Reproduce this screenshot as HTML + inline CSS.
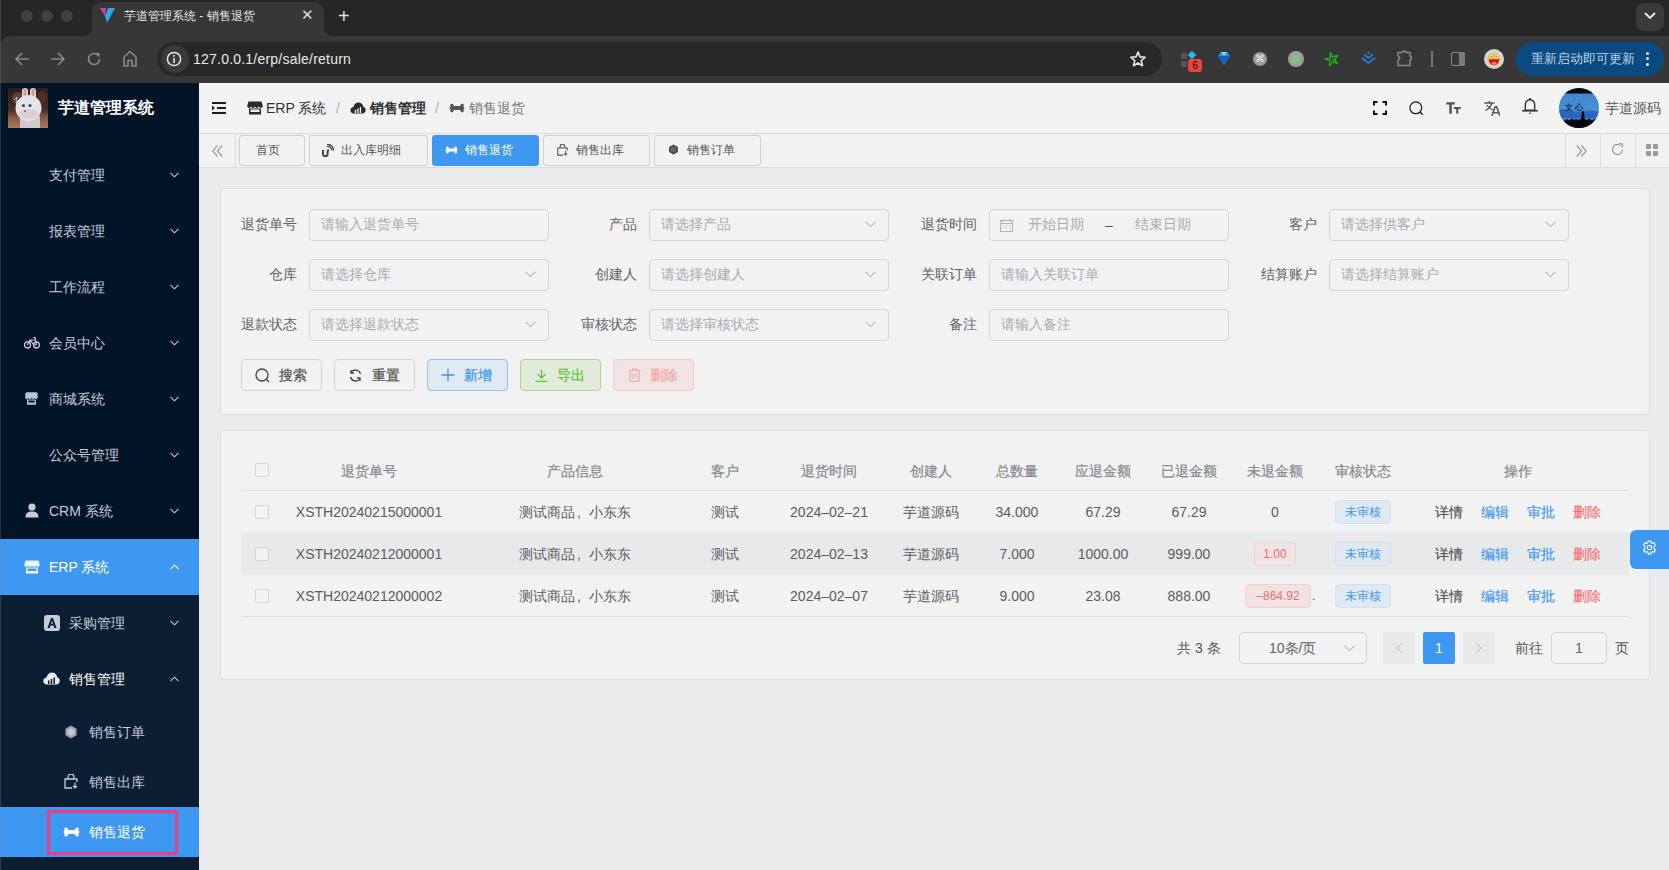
<!DOCTYPE html>
<html><head><meta charset="utf-8">
<style>
*{box-sizing:border-box;margin:0;padding:0}
html,body{width:1669px;height:870px;overflow:hidden;background:#e9eaec;font-family:"Liberation Sans",sans-serif;}
.abs{position:absolute}
/* browser chrome */
#tabbar{position:absolute;left:0;top:0;width:1669px;height:83px;background:#262626}
#toolbar{position:absolute;left:0;top:36px;width:1669px;height:47px;background:#373737;border-radius:10px 0 0 0}
.dot{position:absolute;top:10px;width:12px;height:12px;border-radius:50%;background:#3f3f3f}
#ctab{position:absolute;left:92px;top:2px;width:232px;height:34px;background:#373737;border-radius:9px 9px 0 0}
#ctab:before,#ctab:after{content:"";position:absolute;bottom:0;width:8px;height:8px;background:radial-gradient(circle at 0 0,transparent 8px,#373737 8.5px)}
#ctab:before{left:-8px;background:radial-gradient(circle at 0 0,transparent 7.5px,#373737 8px)}
#ctab:after{right:-8px;background:radial-gradient(circle at 100% 0,transparent 7.5px,#373737 8px)}
#omni{position:absolute;left:157px;top:6px;width:1005px;height:34px;border-radius:17px;background:#282828}
/* sidebar */
#side{position:absolute;left:0;top:83px;width:199px;height:787px;background:#011428;overflow:hidden}
.mi{position:absolute;left:0;width:199px;height:56px;color:#c3ccd8;font-size:14px;line-height:56px}
.mi .t{position:absolute;left:49px;top:0}
.arr{position:absolute;left:170px;top:25px}
.arr.up{transform:rotate(180deg)}
/* header */
#hdr{position:absolute;left:199px;top:83px;width:1470px;height:51px;background:#f2f2f2;border-bottom:1px solid #d9dbe0}
#tags{position:absolute;left:199px;top:134px;width:1470px;height:34px;background:#f2f2f2;border-bottom:1px solid #d9dbe0}
#tags>*{margin-top:-1px}
.tag{position:absolute;top:2px;height:31px;border:1px solid #cfd0d4;border-radius:3px;font-size:12px;line-height:29px;color:#555;background:#f2f2f2}
.tag.act{background:#3e97f1;border-color:#3e97f1;color:#fff}
.card{position:absolute;left:220px;width:1430px;background:#f2f2f2;border:1px solid #dcdee3;border-radius:4px}
.lbl{position:absolute;font-size:14px;color:#606266;line-height:30px;text-align:right}
.inp{position:absolute;height:32px;width:240px;border:1px solid #d3d5da;border-radius:4px;font-size:14px;color:#a8abb2;line-height:28px;padding-left:11px;background:#f2f2f2}
.chev{position:absolute;right:12px;top:11px}
.btn{position:absolute;top:359px;height:32px;border:1px solid #d3d5da;border-radius:4px;font-size:14px;line-height:30px;color:#555;background:#f2f2f2}
.th{position:absolute;top:451px;height:41px;line-height:41px;font-size:14px;color:#85888d;font-weight:400;-webkit-text-stroke:0.2px #85888d;text-align:center}
.td{position:absolute;height:42px;line-height:42px;font-size:14px;color:#5a5c60;text-align:center}
.cb{position:absolute;left:255px;width:14px;height:14px;border:1px solid #d3d5da;border-radius:2px;background:#f2f2f2}
</style></head><body>

<!-- ============ BROWSER CHROME ============ -->
<div id="tabbar">
  <div class="dot" style="left:21px"></div>
  <div class="dot" style="left:41px"></div>
  <div class="dot" style="left:61px"></div>
  <div id="ctab"></div>
  <svg class="abs" style="left:100px;top:7px" width="16" height="17" viewBox="0 0 16 17"><path d="M0 1 L6 1 L5 9 Z" fill="#d63bb5"/><path d="M5 9 L8 1 L15 1 L7 16 Z" fill="#2ba8e8"/></svg>
  <div class="abs" style="left:124px;top:8px;font-size:12px;color:#e6e6e6;line-height:16px">芋道管理系统 - 销售退货</div>
  <div class="abs" style="left:301px;top:7px;font-size:15px;color:#ddd;line-height:16px">✕</div>
  <div class="abs" style="left:338px;top:5px;font-size:20px;color:#ddd;line-height:22px">+</div>
  <div class="abs" style="left:1636px;top:3px;width:28px;height:28px;border-radius:8px;background:#3a3a3a"></div>
  <svg class="abs" style="left:1644px;top:12px" width="12" height="8" viewBox="0 0 12 8"><path d="M1 1 L6 6 L11 1" stroke="#eee" stroke-width="1.8" fill="none"/></svg>
</div>
<div id="toolbar">
  <svg class="abs" style="left:14px;top:15px" width="16" height="16" viewBox="0 0 16 16"><path d="M15 8 H2 M8 2 L2 8 L8 14" stroke="#8a8a8a" stroke-width="1.6" fill="none"/></svg>
  <svg class="abs" style="left:50px;top:15px" width="16" height="16" viewBox="0 0 16 16"><path d="M1 8 H14 M8 2 L14 8 L8 14" stroke="#8a8a8a" stroke-width="1.6" fill="none"/></svg>
  <svg class="abs" style="left:86px;top:15px" width="16" height="16" viewBox="0 0 16 16"><path d="M13.5 8 A5.5 5.5 0 1 1 11.5 3.8" stroke="#8a8a8a" stroke-width="1.6" fill="none"/><path d="M9 2 L13.5 2 L13.5 6.5 Z" fill="#8a8a8a"/></svg>
  <svg class="abs" style="left:122px;top:14px" width="16" height="17" viewBox="0 0 16 17"><path d="M2 16 V7 L8 1.5 L14 7 V16 H10 V10.5 H6 V16 Z" stroke="#8a8a8a" stroke-width="1.6" fill="none"/></svg>
  <div id="omni"></div>
  <div class="abs" style="left:161px;top:45px"></div>
</div>
<div class="abs" style="left:161px;top:45px;width:28px;height:28px;border-radius:50%;background:#3a3a3a"></div>
<svg class="abs" style="left:166px;top:51px" width="16" height="16" viewBox="0 0 16 16"><circle cx="8" cy="8" r="6.6" stroke="#e8e8e8" stroke-width="1.5" fill="none"/><rect x="7.2" y="7" width="1.6" height="5" fill="#e8e8e8"/><rect x="7.2" y="4" width="1.6" height="1.7" fill="#e8e8e8"/></svg>
<div class="abs" style="left:193px;top:50px;font-size:14px;color:#e8e8e8;line-height:18px;letter-spacing:0.22px">127.0.0.1/erp/sale/return</div>
<svg class="abs" style="left:1129px;top:50px" width="18" height="18" viewBox="0 0 18 18"><path d="M9.00 2.00 L11.00 6.85 L16.23 7.25 L12.23 10.65 L13.47 15.75 L9.00 13.00 L4.53 15.75 L5.77 10.65 L1.77 7.25 L7.00 6.85 Z" stroke="#e6e6e6" stroke-width="1.6" fill="none" stroke-linejoin="round"/></svg>

<!-- ext icons -->
<div class="abs" style="left:1181px;top:53px;width:6px;height:6px;background:#555;border-radius:1px"></div>
<div class="abs" style="left:1181px;top:61px;width:6px;height:6px;background:#555;border-radius:1px"></div>
<div class="abs" style="left:1189px;top:52px;width:6px;height:6px;background:#2bb7f5;transform:rotate(45deg)"></div>
<div class="abs" style="left:1188px;top:59px;width:14px;height:13px;background:#e8453c;border-radius:3px;color:#111;font-size:10px;line-height:13px;text-align:center">6</div>
<svg class="abs" style="left:1217px;top:51px" width="14" height="15" viewBox="0 0 14 15"><path d="M1 5 L4 1 H10 L13 5 L7 14 Z" fill="#2f8fe8"/><path d="M1 5 H13 L7 14 Z" fill="#1763c5"/><path d="M4 1 L7 5 L10 1Z" fill="#8fd0ff"/></svg>
<div class="abs" style="left:1253px;top:52px;width:14px;height:14px;border-radius:50%;background:#9a9a9a;color:#eee;font-size:10px;line-height:14px;text-align:center">⌘</div>
<div class="abs" style="left:1288px;top:51px;width:16px;height:16px;border-radius:50%;background:#9e9e9e"></div>
<div class="abs" style="left:1292px;top:55px;width:8px;height:8px;border-radius:50%;background:#7dc97a"></div>
<svg class="abs" style="left:1324px;top:51px" width="16" height="16" viewBox="0 0 16 16"><path d="M6.19 1.54 L13.44 12.71 L1.01 7.93 L13.87 4.49 L5.49 14.84 Z" stroke="#1fb020" stroke-width="1.3" fill="none" stroke-linejoin="round"/></svg>
<svg class="abs" style="left:1361px;top:52px" width="15" height="14" viewBox="0 0 15 14"><path d="M1 6 L7.5 11 L14 6 M3 2.5 L7.5 6 L12 2.5" stroke="#2b7de0" stroke-width="1.6" fill="none"/><rect x="6.5" y="0" width="2" height="2" fill="#2b7de0"/></svg>
<svg class="abs" style="left:1396px;top:49px" width="18" height="18" viewBox="0 0 18 18"><path d="M2 3.5 H6.8 A1.6 1.6 0 0 1 10 3.5 H14 V7.6 A1.6 1.6 0 0 1 14 10.8 V16.5 H2 V11.5 L4 9.3 L2 7 Z" stroke="#8a8a8a" stroke-width="1.5" fill="none" stroke-linejoin="round"/></svg>
<div class="abs" style="left:1431px;top:51px;width:1.5px;height:16px;background:#777"></div>
<div class="abs" style="left:1451px;top:52px;width:14px;height:14px;border:1.5px solid #8a8a8a;border-radius:2px"></div>
<div class="abs" style="left:1459px;top:52px;width:6px;height:14px;background:#7a7a7a;border-radius:0 2px 2px 0"></div>
<svg class="abs" style="left:1484px;top:49px" width="20" height="20" viewBox="0 0 20 20"><circle cx="10" cy="10" r="10" fill="#d4d4d4"/><circle cx="10" cy="10.5" r="6.6" fill="#f0c040"/><path d="M4.8 10.2 H15.2 C15 13.8 12.8 16 10 16 C7.2 16 5 13.8 4.8 10.2 Z" fill="#b8202a"/><ellipse cx="10" cy="14.2" rx="2.6" ry="1.5" fill="#f27a8a"/><ellipse cx="7.5" cy="7.2" rx="1.4" ry="1.1" fill="#f5f5f5"/><ellipse cx="12.6" cy="7.2" rx="1.4" ry="1.1" fill="#f5f5f5"/><circle cx="7.8" cy="7.3" r="0.6" fill="#345"/><circle cx="12.3" cy="7.3" r="0.6" fill="#345"/></svg>
<div class="abs" style="left:1516px;top:42px;width:148px;height:34px;border-radius:17px;background:#0b4a80"></div>
<div class="abs" style="left:1531px;top:50px;font-size:13px;color:#bdd3ea;line-height:18px">重新启动即可更新</div>
<div class="abs" style="left:1646px;top:52px;width:3px;height:3px;border-radius:50%;background:#e8e8e8"></div>
<div class="abs" style="left:1646px;top:57px;width:3px;height:3px;border-radius:50%;background:#e8e8e8"></div>
<div class="abs" style="left:1646px;top:63px;width:3px;height:3px;border-radius:50%;background:#e8e8e8"></div>

<!-- ============ SIDEBAR ============ -->
<div id="side">
  <svg class="abs" style="left:8px;top:5px" width="40" height="40" viewBox="0 0 40 40">
    <defs><linearGradient id="lg1" x1="0" y1="0" x2="0" y2="1"><stop offset="0" stop-color="#2e1c1a"/><stop offset="0.55" stop-color="#4a2e26"/><stop offset="0.75" stop-color="#8a5c48"/><stop offset="1" stop-color="#a77a62"/></linearGradient></defs>
    <rect width="40" height="40" fill="url(#lg1)"/>
    <circle cx="34" cy="8" r="5" fill="#5a3a30" opacity="0.6"/>
    <circle cx="10" cy="10" r="6" fill="#5a5050" opacity="0.7"/>
    <path d="M6 12 L9 9 L8 15 L11 13" stroke="#ddd" stroke-width="0.8" fill="none"/>
    <rect x="14" y="0" width="6" height="13" rx="3" fill="#e0d8da"/><rect x="15.5" y="1" width="3" height="11" fill="#d49a98"/>
    <rect x="22" y="0" width="6" height="13" rx="3" fill="#e0d8da"/><rect x="23.5" y="1" width="3" height="11" fill="#d49a98"/>
    <path d="M12 28 H32 V40 H12 Z" fill="#cfc8cc"/>
    <circle cx="20.5" cy="20" r="13" fill="#e3e3e8"/>
    <ellipse cx="20.5" cy="26" rx="10" ry="5" fill="#dccfd2"/>
    <circle cx="15.5" cy="17.5" r="1.6" fill="#2d4a78"/><circle cx="22" cy="17.5" r="1.6" fill="#2d4a78"/>
    <ellipse cx="17" cy="23" rx="1.2" ry="0.8" fill="#7a3a3a"/>
  </svg>
  <div class="abs" style="left:58px;top:15px;font-size:16px;font-weight:bold;color:#fff;line-height:20px">芋道管理系统</div>
  <div class="mi" style="top:64px"><span class="t">支付管理</span><svg class="arr" width="9" height="6" viewBox="0 0 9 6"><path d="M0.5 0.8 L4.5 4.8 L8.5 0.8" stroke="#c5cad2" stroke-width="1.1" fill="none"/></svg></div>
  <div class="mi" style="top:120px"><span class="t">报表管理</span><svg class="arr" width="9" height="6" viewBox="0 0 9 6"><path d="M0.5 0.8 L4.5 4.8 L8.5 0.8" stroke="#c5cad2" stroke-width="1.1" fill="none"/></svg></div>
  <div class="mi" style="top:176px"><span class="t">工作流程</span><svg class="arr" width="9" height="6" viewBox="0 0 9 6"><path d="M0.5 0.8 L4.5 4.8 L8.5 0.8" stroke="#c5cad2" stroke-width="1.1" fill="none"/></svg></div>
  <div class="mi" style="top:232px"><svg class="abs" style="left:24px;top:21px" width="16" height="13" viewBox="0 0 16 13"><circle cx="3.5" cy="9" r="3" stroke="#c3ccd8" stroke-width="1.3" fill="none"/><circle cx="12.5" cy="9" r="3" stroke="#c3ccd8" stroke-width="1.3" fill="none"/><path d="M3.5 9 L6 4 L10 9 L12.5 9 M6 4 L11 4 M9 1.5 L11 1.5 L12.5 9" stroke="#c3ccd8" stroke-width="1.2" fill="none"/></svg><span class="t">会员中心</span><svg class="arr" width="9" height="6" viewBox="0 0 9 6"><path d="M0.5 0.8 L4.5 4.8 L8.5 0.8" stroke="#c5cad2" stroke-width="1.1" fill="none"/></svg></div>
  <div class="mi" style="top:288px"><svg class="abs" style="left:25px;top:21px" width="13" height="13" viewBox="0 0 13 13"><path d="M2 0.3 H11 C12 0.3 12.7 1 12.7 2 V5.5 C12.7 6.4 12 7 11.2 7 C10.5 7 10 6.6 9.7 6 C9.4 6.6 8.9 7 8.2 7 C7.5 7 7 6.6 6.5 6 C6 6.6 5.5 7 4.8 7 C4.1 7 3.6 6.6 3.3 6 C3 6.6 2.5 7 1.8 7 C1 7 0.3 6.4 0.3 5.5 V2 C0.3 1 1 0.3 2 0.3 Z" fill="#b9c4d3"/><path d="M2 7.6 H11 V12.7 H2 Z M3.3 8.6 V10.6 H9.7 V8.6 Z" fill="#b9c4d3" fill-rule="evenodd"/></svg><span class="t">商城系统</span><svg class="arr" width="9" height="6" viewBox="0 0 9 6"><path d="M0.5 0.8 L4.5 4.8 L8.5 0.8" stroke="#c5cad2" stroke-width="1.1" fill="none"/></svg></div>
  <div class="mi" style="top:344px"><span class="t">公众号管理</span><svg class="arr" width="9" height="6" viewBox="0 0 9 6"><path d="M0.5 0.8 L4.5 4.8 L8.5 0.8" stroke="#c5cad2" stroke-width="1.1" fill="none"/></svg></div>
  <div class="mi" style="top:400px"><svg class="abs" style="left:25px;top:20px" width="14" height="15" viewBox="0 0 14 15"><circle cx="7" cy="4" r="3.6" fill="#c3ccd8"/><path d="M0.5 14.5 C0.5 10 3 8.5 7 8.5 C11 8.5 13.5 10 13.5 14.5 Z" fill="#c3ccd8"/></svg><span class="t">CRM 系统</span><svg class="arr" width="9" height="6" viewBox="0 0 9 6"><path d="M0.5 0.8 L4.5 4.8 L8.5 0.8" stroke="#c5cad2" stroke-width="1.1" fill="none"/></svg></div>
  <div class="mi" style="top:456px;background:#3e97f1;color:#fff"><svg class="abs" style="left:24px;top:21px" width="16" height="14" viewBox="0 0 16 14"><path d="M1.5 0.5 H14.5 L15.8 5 C15.8 6.3 14.8 7 14 7 C13 7 12.3 6.3 12 5.6 C11.6 6.3 10.9 7 10 7 C9 7 8.3 6.3 8 5.6 C7.7 6.3 7 7 6 7 C5 7 4.4 6.3 4 5.6 C3.7 6.3 3 7 2 7 C1.2 7 0.2 6.3 0.2 5 Z" fill="#eef4fc"/><path d="M2 7.5 H14 V13.5 H2 Z M3.5 8.5 V11 H12.5 V8.5 Z" fill="#eef4fc" fill-rule="evenodd"/></svg><span class="t">ERP 系统</span><svg class="arr" width="9" height="6" viewBox="0 0 9 6"><path d="M0.5 5.2 L4.5 1.2 L8.5 5.2" stroke="#ffffff" stroke-width="1.1" fill="none"/></svg></div>
  <div class="abs" style="left:0;top:512px;width:199px;height:275px;background:#0c1e32"></div>
  <div class="mi" style="top:512px"><div class="abs" style="left:44px;top:20px;width:16px;height:16px;border-radius:3px;background:#c5ccd6"></div><svg class="abs" style="left:46px;top:22px" width="12" height="12" viewBox="0 0 12 12"><path d="M1.5 11 L5 1 H7 L10.5 11 H8.3 L7.5 8.5 H4.5 L3.7 11 Z M5 6.8 H7 L6 3.8 Z" fill="#0c1e32" fill-rule="evenodd"/></svg><span class="t" style="left:69px">采购管理</span><svg class="arr" width="9" height="6" viewBox="0 0 9 6"><path d="M0.5 0.8 L4.5 4.8 L8.5 0.8" stroke="#c5cad2" stroke-width="1.1" fill="none"/></svg></div>
  <div class="mi" style="top:568px"><svg class="abs" style="left:43px;top:21px" width="17" height="13" viewBox="0 0 17 13"><path d="M4 12.5 C1.5 12.5 0.3 11 0.3 9 C0.3 7 1.8 5.6 3.6 5.5 C4 2.5 6.3 0.5 9 0.5 C11.8 0.5 13.8 2.5 14.2 5.2 C15.8 5.6 16.8 7 16.8 8.8 C16.8 11 15.2 12.5 13 12.5 Z" fill="#e6e9ee"/><path d="M5 12 V8.5 H6.5 V12 Z M7.7 12 V7 H9.2 V12 Z M10.4 12 V5.5 H11.9 V12 Z" fill="#0c1e32"/></svg><span class="t" style="left:69px;color:#fff">销售管理</span><svg class="arr" width="9" height="6" viewBox="0 0 9 6"><path d="M0.5 5.2 L4.5 1.2 L8.5 5.2" stroke="#c5cad2" stroke-width="1.1" fill="none"/></svg></div>
  <div class="mi" style="top:624px;height:50px;line-height:50px"><svg class="abs" style="left:64px;top:18px" width="14" height="14" viewBox="0 0 14 14"><path d="M7 0.5 L12.6 3.75 V10.25 L7 13.5 L1.4 10.25 V3.75 Z" fill="#9aa3ae"/><path d="M7 3 L10.5 5 V9 L7 11 L3.5 9 V5 Z" fill="#c3c9d0"/></svg><span class="t" style="left:89px">销售订单</span></div>
  <div class="mi" style="top:674px;height:50px;line-height:50px"><svg class="abs" style="left:64px;top:17px" width="14" height="15" viewBox="0 0 14 15"><path d="M4 5 V3 A3 3 0 0 1 10 3 V5 M8 14 H1 V5 H13 V8" stroke="#c8ced6" stroke-width="1.3" fill="none"/><path d="M11 8.5 V14 M9 12 L11 14 L13 12" stroke="#c8ced6" stroke-width="1.2" fill="none"/></svg><span class="t" style="left:89px">销售出库</span></div>
  <div class="mi" style="top:724px;height:50px;line-height:50px;background:#3e97f1;color:#fff"><svg class="abs" style="left:63px;top:20px" width="17" height="10" viewBox="0 0 17 10"><path d="M3 0.5 C4.5 0.5 5 1.8 5 3 H12 C12 1.8 12.5 0.5 14 0.5 C15.6 0.5 16.3 2 15.2 3.3 C16.8 3.8 16.8 6.2 15.2 6.7 C16.3 8 15.6 9.5 14 9.5 C12.5 9.5 12 8.2 12 7 H5 C5 8.2 4.5 9.5 3 9.5 C1.4 9.5 0.7 8 1.8 6.7 C0.2 6.2 0.2 3.8 1.8 3.3 C0.7 2 1.4 0.5 3 0.5 Z" fill="#fff"/></svg><span class="t" style="left:89px">销售退货</span></div>
  <div class="abs" style="left:47px;top:727px;width:131px;height:45px;border:3px solid #f03c7c"></div>
</div>

<!-- ============ HEADER ============ -->
<div id="hdr">
  <svg class="abs" style="left:13px;top:19px" width="14" height="12" viewBox="0 0 14 12"><path d="M0 1 H14 M5 6 H14 M0 11 H14" stroke="#1f1f1f" stroke-width="2"/><path d="M0 3.5 L3 6 L0 8.5 Z" fill="#1f1f1f"/></svg>
  <svg class="abs" style="left:48px;top:18px" width="16" height="14" viewBox="0 0 16 14"><path d="M1.5 0.5 H14.5 L15.8 5 C15.8 6.3 14.8 7 14 7 C13 7 12.3 6.3 12 5.6 C11.6 6.3 10.9 7 10 7 C9 7 8.3 6.3 8 5.6 C7.7 6.3 7 7 6 7 C5 7 4.4 6.3 4 5.6 C3.7 6.3 3 7 2 7 C1.2 7 0.2 6.3 0.2 5 Z" fill="#2a2a2a"/><path d="M2 7.5 H14 V13.5 H2 Z M3.5 8.5 V11 H12.5 V8.5 Z" fill="#2a2a2a" fill-rule="evenodd"/></svg>
  <div class="abs" style="left:67px;top:16px;font-size:14px;color:#303133;line-height:18px">ERP 系统</div>
  <div class="abs" style="left:137px;top:16px;font-size:14px;color:#a8abb2;line-height:18px">/</div>
  <svg class="abs" style="left:151px;top:19px" width="16" height="12" viewBox="0 0 17 13"><path d="M4 12.5 C1.5 12.5 0.3 11 0.3 9 C0.3 7 1.8 5.6 3.6 5.5 C4 2.5 6.3 0.5 9 0.5 C11.8 0.5 13.8 2.5 14.2 5.2 C15.8 5.6 16.8 7 16.8 8.8 C16.8 11 15.2 12.5 13 12.5 Z" fill="#2a2a2a"/><path d="M5 12 V8.5 H6.5 V12 Z M7.7 12 V7 H9.2 V12 Z M10.4 12 V5.5 H11.9 V12 Z" fill="#f2f2f2"/></svg>
  <div class="abs" style="left:171px;top:16px;font-size:14px;color:#303133;font-weight:bold;line-height:18px">销售管理</div>
  <div class="abs" style="left:236px;top:16px;font-size:14px;color:#a8abb2;line-height:18px">/</div>
  <svg class="abs" style="left:250px;top:20px" width="16" height="10" viewBox="0 0 17 10"><path d="M3 0.5 C4.5 0.5 5 1.8 5 3 H12 C12 1.8 12.5 0.5 14 0.5 C15.6 0.5 16.3 2 15.2 3.3 C16.8 3.8 16.8 6.2 15.2 6.7 C16.3 8 15.6 9.5 14 9.5 C12.5 9.5 12 8.2 12 7 H5 C5 8.2 4.5 9.5 3 9.5 C1.4 9.5 0.7 8 1.8 6.7 C0.2 6.2 0.2 3.8 1.8 3.3 C0.7 2 1.4 0.5 3 0.5 Z" fill="#555"/></svg>
  <div class="abs" style="left:270px;top:16px;font-size:14px;color:#777;line-height:18px">销售退货</div>
  <!-- right icons -->
  <svg class="abs" style="left:1174px;top:18px" width="14" height="14" viewBox="0 0 14 14"><path d="M1 4.5 V1 H4.5 M9.5 1 H13 V4.5 M13 9.5 V13 H9.5 M4.5 13 H1 V9.5" stroke="#111" stroke-width="2" fill="none"/></svg>
  <svg class="abs" style="left:1210px;top:18px" width="15" height="15" viewBox="0 0 15 15"><circle cx="6.8" cy="6.8" r="5.9" stroke="#1a1a1a" stroke-width="1.25" fill="none"/><path d="M11 11 L13.8 13.8" stroke="#1a1a1a" stroke-width="1.3"/></svg>
  <svg class="abs" style="left:1247px;top:19px" width="15" height="12" viewBox="0 0 15 12"><path d="M0.3 0.3 H8.8 V2.6 H5.8 V11.7 H3.3 V2.6 H0.3 Z" fill="#555"/><path d="M7.8 5 H14.7 V6.9 H12.3 V11.7 H10.2 V6.9 H7.8 Z" fill="#555"/></svg>
  <svg class="abs" style="left:1285px;top:18px" width="16" height="15" viewBox="0 0 16 15"><path d="M0.3 2 H10.5 M5.3 0 V2 M8 2 C7 5.5 4.8 7.8 1.5 9.5 M2.8 4 C4.3 6.6 6.3 8 8.7 8.8" stroke="#555" stroke-width="1.3" fill="none"/><path d="M7.8 14.8 L11.2 5.8 H12.6 L16 14.8 M9 11.8 H14.8" stroke="#555" stroke-width="1.6" fill="none"/></svg>
  <svg class="abs" style="left:1323px;top:15px" width="16" height="17" viewBox="0 0 16 17"><path d="M8 1.8 C5 1.8 3.3 4 3.3 7 V12.3 H12.7 V7 C12.7 4 11 1.8 8 1.8 Z" stroke="#333" stroke-width="1.4" fill="none"/><path d="M0.3 12.8 H15.7" stroke="#333" stroke-width="1.6"/><rect x="7.2" y="14.5" width="1.6" height="1.4" fill="#333"/><circle cx="8" cy="1.2" r="1.1" fill="#333"/></svg>
  <svg class="abs" style="left:1360px;top:5px" width="40" height="40" viewBox="0 0 40 40">
    <defs><clipPath id="avc"><circle cx="20" cy="20" r="20"/></clipPath>
    <linearGradient id="avg" x1="0" y1="0" x2="0" y2="1"><stop offset="0" stop-color="#3f82cc"/><stop offset="0.6" stop-color="#4a8ed6"/><stop offset="1" stop-color="#2a6cc0"/></linearGradient></defs>
    <g clip-path="url(#avc)">
      <rect width="40" height="40" fill="url(#avg)"/>
      <rect width="40" height="5.5" fill="#06080c"/>
      <path d="M0 22 C8 20 16 26 26 23 C32 21 36 24 40 23 V30 H0 Z" fill="#1f5fb8" opacity="0.8"/>
      <path d="M0 40 V32 L3 31 L5 33 L8 31 L10 32.5 L13 30.5 L15 32 L17 31 L19 32 L22 31 L23 23 L25 23 L25.5 31 L28 32 L30 30.5 L33 32.5 L36 31 L40 32 V40 Z" fill="#05070b"/>
      <text x="6" y="22" font-size="8" font-weight="bold" fill="#1a2a55" font-family="Liberation Sans, sans-serif">文 心</text>
      <rect x="27" y="18" width="5" height="1" fill="#6a90c8"/>
    </g>
  </svg>
  <div class="abs" style="left:1406px;top:16px;font-size:14px;color:#555;line-height:18px">芋道源码</div>
</div>

<!-- ============ TAGS ============ -->
<div id="tags">
  <svg class="abs" style="left:13px;top:12px" width="11" height="12" viewBox="0 0 11 12"><path d="M5.5 0.5 L0.8 6 L5.5 11.5 M10.2 0.5 L5.5 6 L10.2 11.5" stroke="#9a9a9a" stroke-width="1.2" fill="none"/></svg>
  <div class="abs" style="left:36px;top:0;width:1px;height:34px;background:#d9dbe0"></div>
  <div class="tag" style="left:40px;width:66px;padding-left:16px">首页</div>
  <div class="tag" style="left:110px;width:119px"><svg class="abs" style="left:11px;top:8px" width="13" height="13" viewBox="0 0 13 13"><path d="M2 6 V10 A2.3 2.3 0 0 0 6.6 10 V7.5 A1.5 1.5 0 0 1 8 6" stroke="#444" stroke-width="2" fill="none"/><path d="M6 2.5 A4.5 4.5 0 0 1 11 6.5 M6 0.3 A6.5 6.5 0 0 1 12.7 6.5" stroke="#444" stroke-width="1.3" fill="none"/></svg><span class="abs" style="left:31px;top:0">出入库明细</span></div>
  <div class="tag act" style="left:233px;width:107px"><svg class="abs" style="left:12px;top:10px" width="13" height="8" viewBox="0 0 17 10"><path d="M3 0.5 C4.5 0.5 5 1.8 5 3 H12 C12 1.8 12.5 0.5 14 0.5 C15.6 0.5 16.3 2 15.2 3.3 C16.8 3.8 16.8 6.2 15.2 6.7 C16.3 8 15.6 9.5 14 9.5 C12.5 9.5 12 8.2 12 7 H5 C5 8.2 4.5 9.5 3 9.5 C1.4 9.5 0.7 8 1.8 6.7 C0.2 6.2 0.2 3.8 1.8 3.3 C0.7 2 1.4 0.5 3 0.5 Z" fill="#fff"/></svg><span class="abs" style="left:32px;top:0">销售退货</span></div>
  <div class="tag" style="left:344px;width:107px"><svg class="abs" style="left:13px;top:8px" width="11" height="12" viewBox="0 0 14 15"><path d="M4 5 V3 A3 3 0 0 1 10 3 V5 M8 14 H1 V5 H13 V8" stroke="#555" stroke-width="1.4" fill="none"/><path d="M11 8.5 V14 M9 12 L11 14 L13 12" stroke="#555" stroke-width="1.3" fill="none"/></svg><span class="abs" style="left:32px;top:0">销售出库</span></div>
  <div class="tag" style="left:455px;width:107px"><svg class="abs" style="left:13px;top:8px" width="11" height="11" viewBox="0 0 14 14"><path d="M7 0.5 L12.6 3.75 V10.25 L7 13.5 L1.4 10.25 V3.75 Z" fill="#444"/><path d="M7 3 L10.5 5 V9 L7 11 L3.5 9 V5 Z" fill="#666"/></svg><span class="abs" style="left:32px;top:0">销售订单</span></div>
  <div class="abs" style="left:1366px;top:0;width:1px;height:34px;background:#d9dbe0"></div>
  <svg class="abs" style="left:1377px;top:12px" width="11" height="12" viewBox="0 0 11 12"><path d="M0.8 0.5 L5.5 6 L0.8 11.5 M5.5 0.5 L10.2 6 L5.5 11.5" stroke="#9a9a9a" stroke-width="1.2" fill="none"/></svg>
  <div class="abs" style="left:1401px;top:0;width:1px;height:34px;background:#d9dbe0"></div>
  <svg class="abs" style="left:1412px;top:10px" width="13" height="13" viewBox="0 0 13 13"><path d="M11.5 6.5 A5 5 0 1 1 9.5 2.5" stroke="#999" stroke-width="1.2" fill="none"/><path d="M8 0.5 L11.5 1 L11 4.5" stroke="#999" stroke-width="1.2" fill="none"/></svg>
  <div class="abs" style="left:1436px;top:0;width:1px;height:34px;background:#d9dbe0"></div>
  <div class="abs" style="left:1447px;top:11px;width:5px;height:5px;background:#999;border-radius:1px"></div>
  <div class="abs" style="left:1454px;top:11px;width:5px;height:5px;background:#999;border-radius:1px"></div>
  <div class="abs" style="left:1447px;top:18px;width:5px;height:5px;background:#999;border-radius:1px"></div>
  <div class="abs" style="left:1454px;top:18px;width:5px;height:5px;background:#999;border-radius:1px"></div>
</div>

<!-- ============ SEARCH CARD ============ -->
<div class="card" style="top:188px;height:227px"></div>
<div class="lbl" style="left:177px;top:209px;width:120px">退货单号</div>
<div class="inp" style="left:309px;top:209px">请输入退货单号</div>
<div class="lbl" style="left:517px;top:209px;width:120px">产品</div>
<div class="inp sel" style="left:649px;top:209px">请选择产品<svg class="chev" width="11" height="7" viewBox="0 0 11 7"><path d="M0.6 0.8 L5.5 5.6 L10.4 0.8" stroke="#b4b6bb" stroke-width="1.1" fill="none"/></svg></div>
<div class="lbl" style="left:857px;top:209px;width:120px">退货时间</div>
<div class="inp" style="left:989px;top:209px"><svg class="abs" style="left:10px;top:9px" width="13" height="13" viewBox="0 0 13 13"><rect x="0.5" y="1.5" width="12" height="11" stroke="#b0b3b9" fill="none"/><path d="M0.5 4.5 H12.5 M3 0 V3 M10 0 V3" stroke="#b0b3b9"/><path d="M2.5 6.5 H4 M5.8 6.5 H7.3 M9 6.5 H10.5 M2.5 9 H4 M5.8 9 H7.3 M9 9 H10.5" stroke="#c5c7cc"/></svg><span class="abs" style="left:38px;top:0">开始日期</span><span class="abs" style="left:115px;top:1px;color:#555">–</span><span class="abs" style="left:145px;top:0">结束日期</span></div>
<div class="lbl" style="left:1197px;top:209px;width:120px">客户</div>
<div class="inp sel" style="left:1329px;top:209px">请选择供客户<svg class="chev" width="11" height="7" viewBox="0 0 11 7"><path d="M0.6 0.8 L5.5 5.6 L10.4 0.8" stroke="#b4b6bb" stroke-width="1.1" fill="none"/></svg></div>
<div class="lbl" style="left:177px;top:259px;width:120px">仓库</div>
<div class="inp sel" style="left:309px;top:259px">请选择仓库<svg class="chev" width="11" height="7" viewBox="0 0 11 7"><path d="M0.6 0.8 L5.5 5.6 L10.4 0.8" stroke="#b4b6bb" stroke-width="1.1" fill="none"/></svg></div>
<div class="lbl" style="left:517px;top:259px;width:120px">创建人</div>
<div class="inp sel" style="left:649px;top:259px">请选择创建人<svg class="chev" width="11" height="7" viewBox="0 0 11 7"><path d="M0.6 0.8 L5.5 5.6 L10.4 0.8" stroke="#b4b6bb" stroke-width="1.1" fill="none"/></svg></div>
<div class="lbl" style="left:857px;top:259px;width:120px">关联订单</div>
<div class="inp" style="left:989px;top:259px">请输入关联订单</div>
<div class="lbl" style="left:1197px;top:259px;width:120px">结算账户</div>
<div class="inp sel" style="left:1329px;top:259px">请选择结算账户<svg class="chev" width="11" height="7" viewBox="0 0 11 7"><path d="M0.6 0.8 L5.5 5.6 L10.4 0.8" stroke="#b4b6bb" stroke-width="1.1" fill="none"/></svg></div>
<div class="lbl" style="left:177px;top:309px;width:120px">退款状态</div>
<div class="inp sel" style="left:309px;top:309px">请选择退款状态<svg class="chev" width="11" height="7" viewBox="0 0 11 7"><path d="M0.6 0.8 L5.5 5.6 L10.4 0.8" stroke="#b4b6bb" stroke-width="1.1" fill="none"/></svg></div>
<div class="lbl" style="left:517px;top:309px;width:120px">审核状态</div>
<div class="inp sel" style="left:649px;top:309px">请选择审核状态<svg class="chev" width="11" height="7" viewBox="0 0 11 7"><path d="M0.6 0.8 L5.5 5.6 L10.4 0.8" stroke="#b4b6bb" stroke-width="1.1" fill="none"/></svg></div>
<div class="lbl" style="left:857px;top:309px;width:120px">备注</div>
<div class="inp" style="left:989px;top:309px">请输入备注</div>
<div class="btn" style="left:241px;width:81px"><svg class="abs" style="left:13px;top:8px" width="15" height="15" viewBox="0 0 15 15"><circle cx="7" cy="7" r="6" stroke="#444" stroke-width="1.3" fill="none"/><path d="M11.3 11.3 L14 14" stroke="#444" stroke-width="1.3"/></svg><span class="abs" style="left:37px;top:0;-webkit-text-stroke:0.25px currentColor">搜索</span></div>
<div class="btn" style="left:334px;width:81px"><svg class="abs" style="left:14px;top:9px" width="13" height="13" viewBox="0 0 13 13"><path d="M11.5 5 A5.2 5.2 0 0 0 2 3.5 M1.5 8 A5.2 5.2 0 0 0 11 9.5" stroke="#444" stroke-width="1.3" fill="none"/><path d="M2 1 V4 H5 M11 12 V9 H8" stroke="#444" stroke-width="1.3" fill="none"/></svg><span class="abs" style="left:37px;top:0;-webkit-text-stroke:0.25px currentColor">重置</span></div>
<div class="btn" style="left:427px;width:81px;background:#e0e8f2;border-color:#8fc2f6;color:#3e97f1"><svg class="abs" style="left:13px;top:8px" width="14" height="14" viewBox="0 0 14 14"><path d="M7 0.5 V13.5 M0.5 7 H13.5" stroke="#3e97f1" stroke-width="1.3"/></svg><span class="abs" style="left:36px;top:0;-webkit-text-stroke:0.25px currentColor">新增</span></div>
<div class="btn" style="left:520px;width:81px;background:#e1ebdc;border-color:#a6d88e;color:#67c23a"><svg class="abs" style="left:14px;top:9px" width="13" height="13" viewBox="0 0 13 13"><path d="M6.5 0.5 V9 M2.5 5 L6.5 9 L10.5 5 M0.5 12.3 H12.5" stroke="#67c23a" stroke-width="1.3" fill="none"/></svg><span class="abs" style="left:36px;top:0;-webkit-text-stroke:0.25px currentColor">导出</span></div>
<div class="btn" style="left:613px;width:81px;background:#efe3e3;border-color:#f3caca;color:#f4a8a8"><svg class="abs" style="left:14px;top:8px" width="13" height="14" viewBox="0 0 13 14"><path d="M0.5 2.5 H12.5 M4.5 2.5 V0.8 H8.5 V2.5 M2 2.5 V13.3 H11 V2.5 M5 5.5 V10.5 M8 5.5 V10.5" stroke="#f4a8a8" stroke-width="1.1" fill="none"/></svg><span class="abs" style="left:36px;top:0;-webkit-text-stroke:0.25px currentColor">删除</span></div>

<!-- ============ TABLE CARD ============ -->
<div class="card" style="top:430px;height:250px"></div>
<div class="abs" style="left:241px;top:532px;width:1388px;height:43px;background:#e8e9eb"></div>
<div class="abs" style="left:241px;top:490px;width:1388px;height:1px;background:#dfe1e5"></div>
<div class="abs" style="left:241px;top:616px;width:1388px;height:1px;background:#dfe1e5"></div>
<div class="cb" style="top:463px"></div>
<div class="cb" style="top:505px"></div>
<div class="cb" style="top:547px"></div>
<div class="cb" style="top:589px"></div>
<div class="th" style="left:309px;width:120px">退货单号</div>
<div class="th" style="left:515px;width:120px">产品信息</div>
<div class="th" style="left:665px;width:120px">客户</div>
<div class="th" style="left:769px;width:120px">退货时间</div>
<div class="th" style="left:871px;width:120px">创建人</div>
<div class="th" style="left:957px;width:120px">总数量</div>
<div class="th" style="left:1043px;width:120px">应退金额</div>
<div class="th" style="left:1129px;width:120px">已退金额</div>
<div class="th" style="left:1215px;width:120px">未退金额</div>
<div class="th" style="left:1303px;width:120px">审核状态</div>
<div class="th" style="left:1458px;width:120px">操作</div>
<div class="td" style="left:269px;top:491px;width:200px">XSTH20240215000001</div>
<div class="td" style="left:475px;top:491px;width:200px">测试商品<span style="display:inline-block;width:14px;text-align:left;padding-left:2px">,</span>小东东</div>
<div class="td" style="left:625px;top:491px;width:200px">测试</div>
<div class="td" style="left:729px;top:491px;width:200px">2024–02–21</div>
<div class="td" style="left:831px;top:491px;width:200px">芋道源码</div>
<div class="td" style="left:917px;top:491px;width:200px">34.000</div>
<div class="td" style="left:1003px;top:491px;width:200px">67.29</div>
<div class="td" style="left:1089px;top:491px;width:200px">67.29</div>
<div class="td" style="left:1175px;top:491px;width:200px">0</div>
<div class="abs" style="left:1335px;top:500px;width:56px;height:24px;border:1px solid #d0e1f4;background:#e0e8f1;border-radius:4px;color:#3e97f1;font-size:12px;line-height:22px;text-align:center">未审核</div>
<div class="abs" style="left:1435px;top:491px;line-height:42px;font-size:14px;color:#505050;-webkit-text-stroke:0.15px #505050">详情</div>
<div class="abs" style="left:1481px;top:491px;line-height:42px;font-size:14px;color:#3e97f1;-webkit-text-stroke:0.15px #3e97f1">编辑</div>
<div class="abs" style="left:1527px;top:491px;line-height:42px;font-size:14px;color:#3e97f1;-webkit-text-stroke:0.15px #3e97f1">审批</div>
<div class="abs" style="left:1573px;top:491px;line-height:42px;font-size:14px;color:#f56c6c;-webkit-text-stroke:0.15px #f56c6c">删除</div>
<div class="td" style="left:269px;top:533px;width:200px">XSTH20240212000001</div>
<div class="td" style="left:475px;top:533px;width:200px">测试商品<span style="display:inline-block;width:14px;text-align:left;padding-left:2px">,</span>小东东</div>
<div class="td" style="left:625px;top:533px;width:200px">测试</div>
<div class="td" style="left:729px;top:533px;width:200px">2024–02–13</div>
<div class="td" style="left:831px;top:533px;width:200px">芋道源码</div>
<div class="td" style="left:917px;top:533px;width:200px">7.000</div>
<div class="td" style="left:1003px;top:533px;width:200px">1000.00</div>
<div class="td" style="left:1089px;top:533px;width:200px">999.00</div>
<div class="abs" style="left:1254px;top:542px;width:42px;height:24px;border:1px solid #f3d0d0;background:#f1e3e3;border-radius:4px;color:#f56c6c;font-size:12px;line-height:22px;text-align:center">1.00</div>
<div class="abs" style="left:1335px;top:542px;width:56px;height:24px;border:1px solid #d0e1f4;background:#e0e8f1;border-radius:4px;color:#3e97f1;font-size:12px;line-height:22px;text-align:center">未审核</div>
<div class="abs" style="left:1435px;top:533px;line-height:42px;font-size:14px;color:#505050;-webkit-text-stroke:0.15px #505050">详情</div>
<div class="abs" style="left:1481px;top:533px;line-height:42px;font-size:14px;color:#3e97f1;-webkit-text-stroke:0.15px #3e97f1">编辑</div>
<div class="abs" style="left:1527px;top:533px;line-height:42px;font-size:14px;color:#3e97f1;-webkit-text-stroke:0.15px #3e97f1">审批</div>
<div class="abs" style="left:1573px;top:533px;line-height:42px;font-size:14px;color:#f56c6c;-webkit-text-stroke:0.15px #f56c6c">删除</div>
<div class="td" style="left:269px;top:575px;width:200px">XSTH20240212000002</div>
<div class="td" style="left:475px;top:575px;width:200px">测试商品<span style="display:inline-block;width:14px;text-align:left;padding-left:2px">,</span>小东东</div>
<div class="td" style="left:625px;top:575px;width:200px">测试</div>
<div class="td" style="left:729px;top:575px;width:200px">2024–02–07</div>
<div class="td" style="left:831px;top:575px;width:200px">芋道源码</div>
<div class="td" style="left:917px;top:575px;width:200px">9.000</div>
<div class="td" style="left:1003px;top:575px;width:200px">23.08</div>
<div class="td" style="left:1089px;top:575px;width:200px">888.00</div>
<div class="abs" style="left:1245px;top:584px;width:66px;height:24px;border:1px solid #f3d0d0;background:#f1e3e3;border-radius:4px;color:#f56c6c;font-size:12px;line-height:22px;text-align:center">–864.92</div>
<div class="abs" style="left:1312px;top:575px;line-height:42px;font-size:12px;color:#555">.</div>
<div class="abs" style="left:1335px;top:584px;width:56px;height:24px;border:1px solid #d0e1f4;background:#e0e8f1;border-radius:4px;color:#3e97f1;font-size:12px;line-height:22px;text-align:center">未审核</div>
<div class="abs" style="left:1435px;top:575px;line-height:42px;font-size:14px;color:#505050;-webkit-text-stroke:0.15px #505050">详情</div>
<div class="abs" style="left:1481px;top:575px;line-height:42px;font-size:14px;color:#3e97f1;-webkit-text-stroke:0.15px #3e97f1">编辑</div>
<div class="abs" style="left:1527px;top:575px;line-height:42px;font-size:14px;color:#3e97f1;-webkit-text-stroke:0.15px #3e97f1">审批</div>
<div class="abs" style="left:1573px;top:575px;line-height:42px;font-size:14px;color:#f56c6c;-webkit-text-stroke:0.15px #f56c6c">删除</div>
<div class="abs" style="left:1177px;top:632px;line-height:32px;font-size:14px;color:#555">共 3 条</div>
<div class="inp" style="left:1239px;top:632px;width:128px;color:#606266;padding-left:29px;line-height:30px">10条/页<svg class="abs" style="left:104px;top:12px" width="11" height="7" viewBox="0 0 11 7"><path d="M0.6 0.8 L5.5 5.6 L10.4 0.8" stroke="#b4b6bb" stroke-width="1.1" fill="none"/></svg></div>
<div class="abs" style="left:1383px;top:632px;width:32px;height:32px;background:#e8e9eb;border-radius:2px"><svg class="abs" style="left:13px;top:11px" width="6" height="10" viewBox="0 0 6 10"><path d="M5.5 0.5 L1 5 L5.5 9.5" stroke="#b5b8be" stroke-width="1" fill="none"/></svg></div>
<div class="abs" style="left:1423px;top:632px;width:32px;height:32px;background:#3e97f1;border-radius:2px;color:#fff;font-size:14px;line-height:32px;text-align:center;font-weight:500">1</div>
<div class="abs" style="left:1463px;top:632px;width:32px;height:32px;background:#e8e9eb;border-radius:2px"><svg class="abs" style="left:13px;top:11px" width="6" height="10" viewBox="0 0 6 10"><path d="M0.5 0.5 L5 5 L0.5 9.5" stroke="#b5b8be" stroke-width="1" fill="none"/></svg></div>
<div class="abs" style="left:1515px;top:632px;line-height:32px;font-size:14px;color:#555">前往</div>
<div class="inp" style="left:1551px;top:632px;width:56px;color:#606266;padding-left:0;text-align:center;line-height:30px">1</div>
<div class="abs" style="left:1615px;top:632px;line-height:32px;font-size:14px;color:#555">页</div>
<div class="abs" style="left:1630px;top:530px;width:39px;height:39px;background:#3e97f1;border-radius:6px 0 0 6px"><svg class="abs" style="left:12px;top:10px" width="15" height="15" viewBox="0 0 24 24"><path d="M12 8.5 A3.5 3.5 0 1 0 12 15.5 A3.5 3.5 0 1 0 12 8.5 Z M10 1.5 H14 L14.6 4.3 C15.4 4.6 16.1 5 16.8 5.5 L19.5 4.6 L21.5 8 L19.4 9.9 C19.5 10.6 19.5 11.4 19.5 12 C19.5 12.6 19.5 13.4 19.4 14.1 L21.5 16 L19.5 19.4 L16.8 18.5 C16.1 19 15.4 19.4 14.6 19.7 L14 22.5 H10 L9.4 19.7 C8.6 19.4 7.9 19 7.2 18.5 L4.5 19.4 L2.5 16 L4.6 14.1 C4.5 13.4 4.5 12.6 4.5 12 C4.5 11.4 4.5 10.6 4.6 9.9 L2.5 8 L4.5 4.6 L7.2 5.5 C7.9 5 8.6 4.6 9.4 4.3 Z" stroke="#fff" stroke-width="1.8" fill="none" stroke-linejoin="round"/></svg></div>
<div class="abs" style="left:0;top:0;width:1px;height:870px;background:rgba(130,130,130,0.3)"></div>
</body></html>
